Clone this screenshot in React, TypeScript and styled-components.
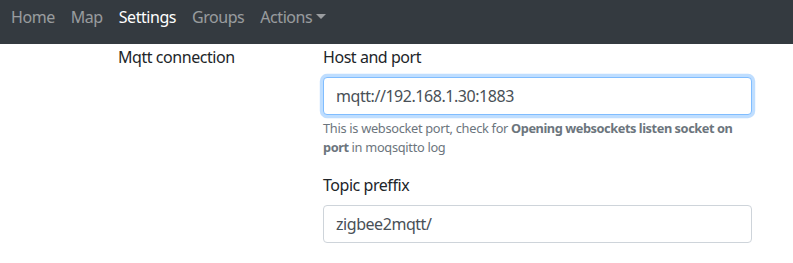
import React from 'react'
import styled, { createGlobalStyle } from 'styled-components'

const GlobalStyle = createGlobalStyle`
  html, body {
    margin: 0;
    padding: 0;
    background: #fff;
  }
  body {
    font-family: "Noto Sans", "Open Sans", sans-serif;
    font-size: 16px;
    line-height: 1.5;
    letter-spacing: -0.45px;
    color: #212529;
  }
  * { box-sizing: border-box; }
`

const Navbar = styled.nav`
  display: flex;
  align-items: flex-start;
  height: 44px;
  padding: 5px 3px 0;
  background: #343a40;
`

const NavLink = styled.a<{ active?: boolean }>`
  display: inline-flex;
  align-items: center;
  padding: 0 8px;
  line-height: 24px;
  color: ${(props) => (props.active ? '#fff' : 'rgba(255, 255, 255, 0.5)')};
  text-decoration: none;
  cursor: pointer;
`

const Caret = styled.span`
  display: inline-block;
  margin-left: 4px;
  margin-top: -2px;
  border-top: 5px solid currentColor;
  border-left: 5px solid transparent;
  border-right: 5px solid transparent;
`

const Row = styled.div`
  display: flex;
  padding: 1px 41px 0 118px;
`

const Legend = styled.div`
  width: 205px;
  flex-shrink: 0;
`

const Fields = styled.div`
  flex: 1;
`

const FormGroup = styled.div`
  margin-bottom: 16px;
`

const Label = styled.label`
  display: block;
  margin-bottom: 8px;
`

const Input = styled.input<{ focused?: boolean }>`
  display: block;
  width: 100%;
  height: 38px;
  padding: 6px 12px;
  font: inherit;
  letter-spacing: -0.45px;
  color: #495057;
  background: #fff;
  border: 1px solid ${(props) => (props.focused ? '#80bdff' : '#ced4da')};
  border-radius: 4px;
  box-shadow: ${(props) =>
    props.focused ? '0 0 0 3.2px rgba(0, 123, 255, 0.25)' : 'none'};
  outline: none;
`

const HelpText = styled.small`
  display: block;
  margin-top: 4px;
  font-size: 12.8px;
  line-height: 1.5;
  letter-spacing: -0.3px;
  color: #6c757d;

  b {
    font-weight: 700;
    letter-spacing: -0.45px;
  }
`

const App: React.FC = () => {
  return (
    <>
      <GlobalStyle />
      <Navbar>
        <NavLink>Home</NavLink>
        <NavLink>Map</NavLink>
        <NavLink active>Settings</NavLink>
        <NavLink>Groups</NavLink>
        <NavLink>
          Actions
          <Caret />
        </NavLink>
      </Navbar>
      <Row>
        <Legend>Mqtt connection</Legend>
        <Fields>
          <FormGroup>
            <Label>Host and port</Label>
            <Input focused defaultValue="mqtt://192.168.1.30:1883" />
            <HelpText>
              This is websocket port, check for{' '}
              <b>Opening websockets listen socket on port</b> in moqsqitto log
            </HelpText>
          </FormGroup>
          <FormGroup>
            <Label>Topic preffix</Label>
            <Input defaultValue="zigbee2mqtt/" />
          </FormGroup>
        </Fields>
      </Row>
    </>
  )
}

export default App
